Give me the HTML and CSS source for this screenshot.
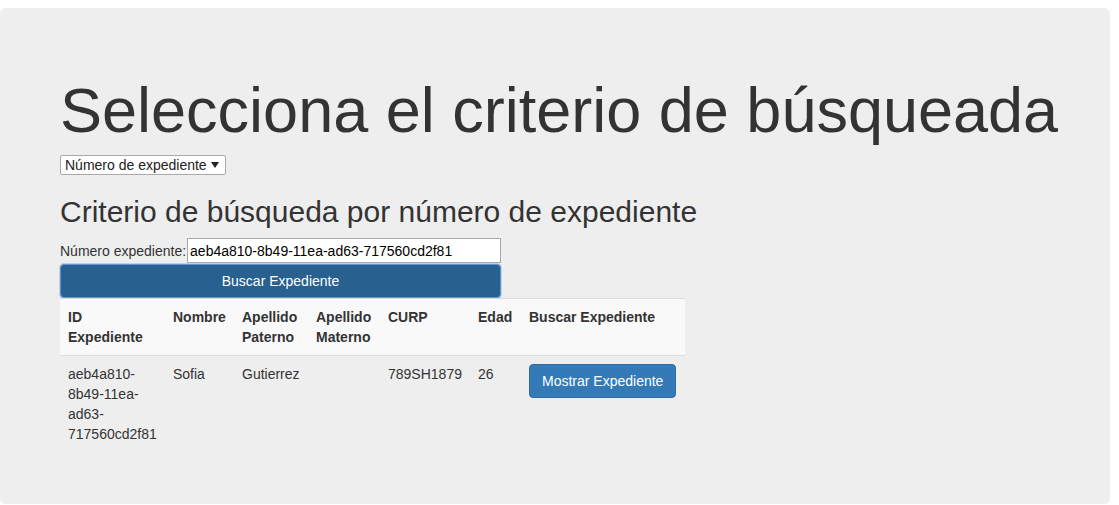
FILE: index.html
```html
<!DOCTYPE html>
<html lang="es">
<head>
<meta charset="utf-8">
<title>Búsqueda de expediente</title>
<link rel="stylesheet" href="styles.css">
</head>
<body>
<div class="jumbotron">
  <h1 class="title">Selecciona el criterio de búsqueada</h1>
  <div class="select-row">
    <div class="select-wrap">
      <select class="criterio">
        <option>Número de expediente</option>
        <option>Nombre</option>
        <option>CURP</option>
      </select>
      <svg class="select-arrow" width="8" height="6" viewBox="0 0 8 6"><path d="M0 0 L8 0 L4 6 Z" fill="#222"/></svg>
    </div>
  </div>
  <h2 class="subtitle">Criterio de búsqueda por número de expediente</h2>
  <div class="form-row">
    <label class="lbl" for="exp">Número expediente:</label><input id="exp" class="exp-input" type="text" value="aeb4a810-8b49-11ea-ad63-717560cd2f81">
  </div>
  <button class="btn-buscar" type="button">Buscar Expediente</button>
  <table class="results">
    <colgroup>
      <col class="c1"><col class="c2"><col class="c3"><col class="c4"><col class="c5"><col class="c6"><col class="c7">
    </colgroup>
    <tbody>
      <tr class="head-row">
        <th>ID Expediente</th>
        <th>Nombre</th>
        <th>Apellido Paterno</th>
        <th>Apellido Materno</th>
        <th>CURP</th>
        <th>Edad</th>
        <th>Buscar Expediente</th>
      </tr>
      <tr>
        <td>aeb4a810-<wbr>8b49-<wbr>11ea-<wbr>ad63-<wbr>717560cd2f81</td>
        <td>Sofia</td>
        <td>Gutierrez</td>
        <td></td>
        <td>789SH1879</td>
        <td>26</td>
        <td><button class="btn-mostrar" type="button">Mostrar Expediente</button></td>
      </tr>
    </tbody>
  </table>
</div>
</body>
</html>
```

FILE: styles.css
```css
* { box-sizing: border-box; }

html, body {
  margin: 0;
  padding: 0;
  background: #fff;
}

body {
  padding-top: 8px;
  font-family: "Liberation Sans", Arial, Helvetica, sans-serif;
  font-size: 14px;
  line-height: 20px;
  color: #333;
}

.jumbotron {
  width: 1110px;
  background: #eeeeee;
  border-radius: 6px;
  padding: 48px 60px 48px 60px;
}

.title {
  margin: 20px 0 10px 0;
  font-size: 63px;
  font-weight: 500;
  line-height: 1.1;
  color: #333;
  white-space: nowrap;
}

.select-row {
  display: flex;
  height: 20px;
}

.select-wrap {
  position: relative;
  display: flex;
  align-items: center;
  width: 166px;
  height: 20px;
  background: #fff;
  border: 1px solid #a9a9a9;
  border-radius: 2px;
}

.criterio {
  appearance: none;
  -webkit-appearance: none;
  border: 0;
  background: transparent;
  font-family: "Liberation Sans", Arial, sans-serif;
  font-size: 14px;
  color: #222;
  padding: 0 0 0 4px;
  margin: 0;
  height: 18px;
  width: 100%;
  outline: none;
}

.select-arrow {
  position: absolute;
  right: 6px;
  top: 6px;
  pointer-events: none;
}

.subtitle {
  margin: 20px 0 10px 0;
  font-size: 30px;
  font-weight: 500;
  line-height: 1.1;
  color: #333;
}

.form-row {
  display: flex;
  align-items: center;
  height: 25px;
}

.lbl {
  font-weight: normal;
  margin-right: 1px;
}

.exp-input {
  width: 314px;
  height: 25px;
  border: 1px solid #a9a9a9;
  padding: 1px 2px;
  font-family: "Liberation Sans", Arial, sans-serif;
  font-size: 14px;
  color: #000;
  background: #fff;
  margin: 0;
}

.btn-buscar {
  display: block;
  width: 441px;
  height: 34px;
  margin: 1px 0 0 0;
  padding: 6px 12px;
  font-family: "Liberation Sans", Arial, sans-serif;
  font-size: 14px;
  line-height: 20px;
  color: #fff;
  background: #286090;
  border: 1px solid #5e97d6;
  border-radius: 4px;
  box-shadow: 0 0 0 1px rgba(94, 151, 214, 0.35);
}

.results {
  width: 625px;
  table-layout: fixed;
  border-collapse: collapse;
  border-spacing: 0;
  margin-bottom: 4px;
}

.c1 { width: 105px; }
.c2 { width: 69px; }
.c3 { width: 74px; }
.c4 { width: 72px; }
.c5 { width: 90px; }
.c6 { width: 51px; }
.c7 { width: 164px; }

.results th,
.results td {
  padding: 8px;
  line-height: 20px;
  text-align: left;
  vertical-align: top;
  border-top: 1px solid #ddd;
}

.results th {
  font-weight: bold;
}

.head-row {
  background: #f9f9f9;
}

.btn-mostrar {
  display: inline-block;
  height: 34px;
  padding: 6px 12px;
  font-family: "Liberation Sans", Arial, sans-serif;
  font-size: 14px;
  line-height: 20px;
  color: #fff;
  background: #337ab7;
  border: 1px solid #2e6da4;
  border-radius: 4px;
  white-space: nowrap;
}
```
